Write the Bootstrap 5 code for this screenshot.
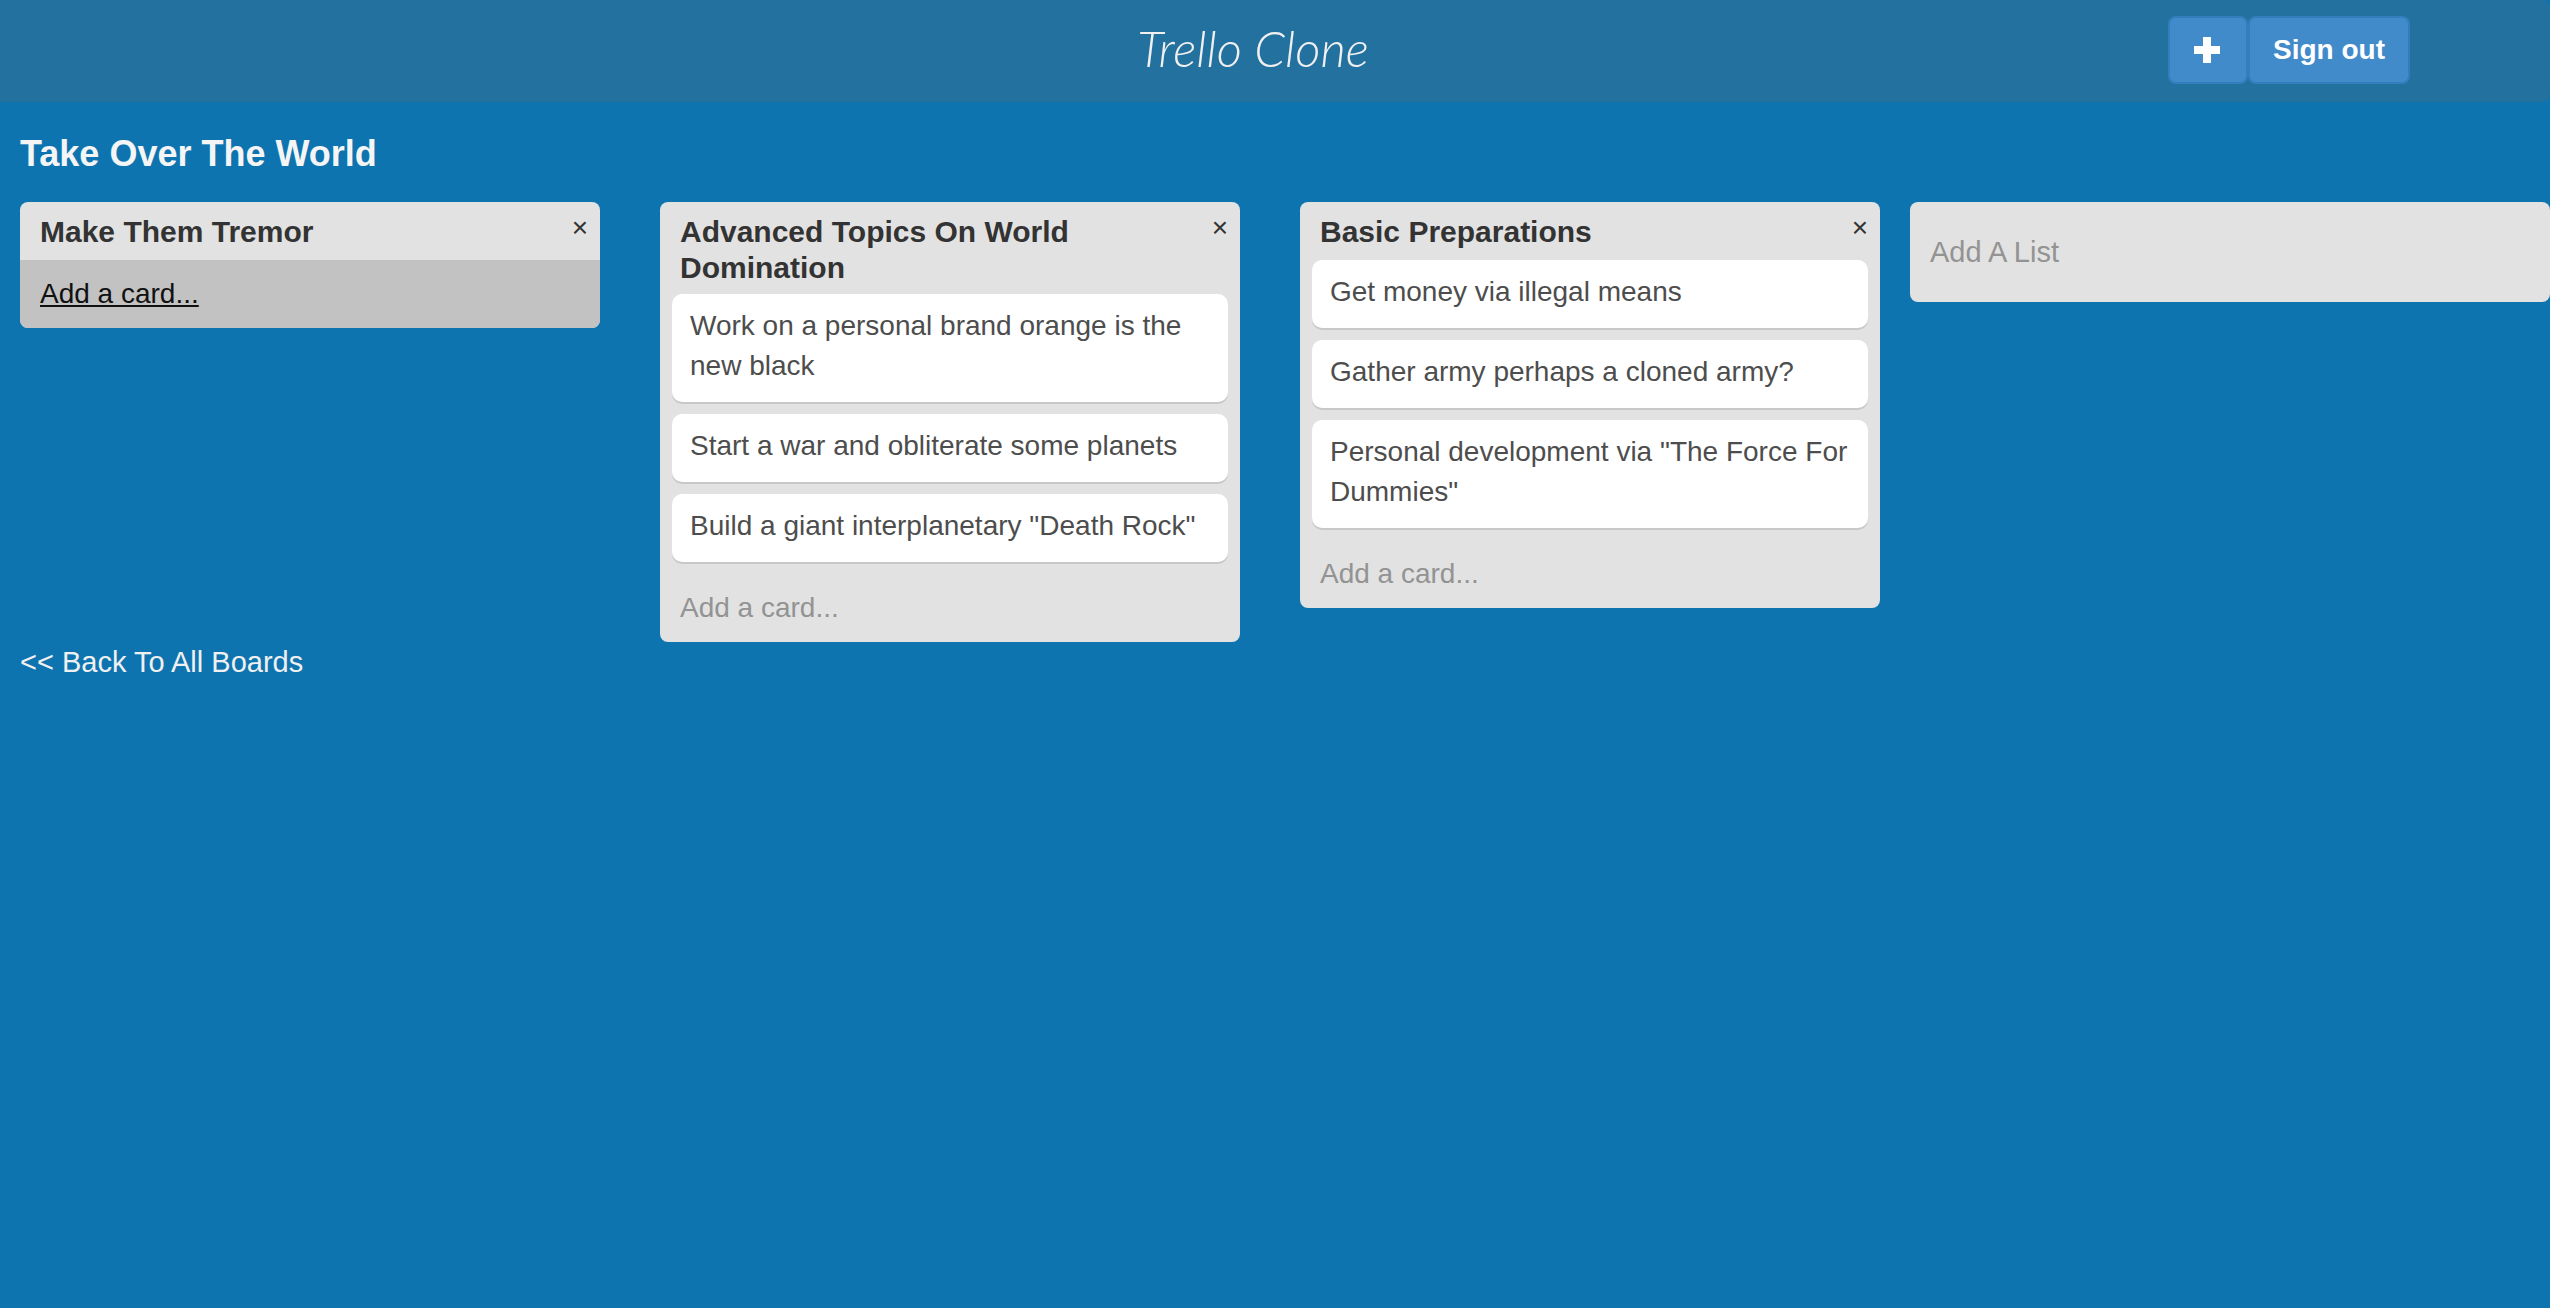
<!DOCTYPE html>
<html lang="en">
<head>
<meta charset="utf-8">
<meta name="viewport" content="width=device-width, initial-scale=1">
<title>Trello Clone</title>
<link href="https://cdn.jsdelivr.net/npm/bootstrap@5.3.0/dist/css/bootstrap.min.css" rel="stylesheet">
<style>
body { background: #0d74b0; color: #333; font: 28px/40px "Liberation Sans", Arial, sans-serif; overflow-x: hidden; }
a { text-decoration: none; }
.topbar { background: #23719f; border-radius: 0 8px 8px 0; min-height: 102px; padding: 16px 140px 18px 96px; }
.topbar-side { flex: 1 1 0; }
.brand-script { color: #f0f0f0; font: italic 300 49px/60px Lato, sans-serif; padding-bottom: 4px; }
.brand-script:hover { color: #fff; }
.btn-board { --bs-btn-color: #fff; --bs-btn-bg: #428bca; --bs-btn-border-color: #357ebd; --bs-btn-border-width: 2px; --bs-btn-border-radius: 8px; --bs-btn-hover-color: #fff; --bs-btn-hover-bg: #3276b1; --bs-btn-font-size: 28px; --bs-btn-font-weight: 700; --bs-btn-line-height: 40px; --bs-btn-padding-x: 23px; --bs-btn-padding-y: 12px; }
.board-title { color: #f5f5f5; font-size: 36px; font-weight: 700; line-height: 40px; margin: 0; padding: 32px 20px 28px; }
.board-lists { margin-left: -10px; }
.list-col { padding: 0 30px; }
.list-box { background: #e2e2e2; border-radius: 8px; overflow: hidden; }
.list-head { min-height: 58px; padding: 12px 12px 8px 20px; }
.list-name { font-size: 30px; font-weight: 700; line-height: 36px; }
.list-close { background: none; border: 0; color: #333; padding: 0; line-height: 28px; }
.card-stack { padding: 0 12px; }
.task { background: #fff; border-radius: 10px; box-shadow: 0 2px 0 #c8c8c8; color: #4d4d4d; margin-bottom: 12px; padding: 12px 18px 16px; }
.add-card { color: #939393; padding: 14px 20px; }
.add-card:hover, .add-card.is-active { background: #c2c2c2; color: #111; text-decoration: underline; }
.add-list { background: #e2e2e2; border: 0; border-radius: 8px; color: #939393; font-size: 29px; padding: 30px 20px; }
.back-link { color: #f0f0f0; font-size: 29px; padding: 0 20px; }
</style>
</head>
<body>
<nav class="topbar d-flex align-items-center">
  <div class="topbar-side"></div>
  <a class="brand-script" href="#">Trello Clone</a>
  <div class="topbar-side d-flex justify-content-end">
    <button type="button" class="btn btn-board d-flex align-items-center px-4" aria-label="New board">
      <svg width="28" height="28" viewBox="0 0 28 28" aria-hidden="true"><path d="M9 1h8v9h9v8h-9v9h-8v-9H0v-8h9z" fill="#fff"/></svg>
    </button>
    <button type="button" class="btn btn-board">Sign out</button>
  </div>
</nav>

<main>
  <h1 class="board-title">Take Over The World</h1>
  <div class="board-lists row g-0 align-items-start">
    <section class="col-3 list-col">
      <div class="list-box">
        <header class="list-head d-flex justify-content-between align-items-start">
          <h2 class="list-name m-0">Make Them Tremor</h2>
          <button type="button" class="list-close" aria-label="Delete list">×</button>
        </header>
        <a class="add-card is-active d-block" href="#">Add a card...</a>
      </div>
    </section>
    <section class="col-3 list-col">
      <div class="list-box">
        <header class="list-head d-flex justify-content-between align-items-start">
          <h2 class="list-name m-0">Advanced Topics On World Domination</h2>
          <button type="button" class="list-close" aria-label="Delete list">×</button>
        </header>
        <div class="card-stack">
          <div class="task">Work on a personal brand orange is the new black</div>
          <div class="task">Start a war and obliterate some planets</div>
          <div class="task">Build a giant interplanetary "Death Rock"</div>
        </div>
        <a class="add-card d-block" href="#">Add a card...</a>
      </div>
    </section>
    <section class="col-3 list-col">
      <div class="list-box">
        <header class="list-head d-flex justify-content-between align-items-start">
          <h2 class="list-name m-0">Basic Preparations</h2>
          <button type="button" class="list-close" aria-label="Delete list">×</button>
        </header>
        <div class="card-stack">
          <div class="task">Get money via illegal means</div>
          <div class="task">Gather army perhaps a cloned army?</div>
          <div class="task">Personal development via "The Force For Dummies"</div>
        </div>
        <a class="add-card d-block" href="#">Add a card...</a>
      </div>
    </section>
    <div class="col-3">
      <button type="button" class="add-list w-100 text-start">Add A List</button>
    </div>
  </div>
  <a class="back-link d-inline-block" href="#">&lt;&lt; Back To All Boards</a>
</main>
<script src="https://cdn.jsdelivr.net/npm/bootstrap@5.3.0/dist/js/bootstrap.bundle.min.js"></script>
</body>
</html>
